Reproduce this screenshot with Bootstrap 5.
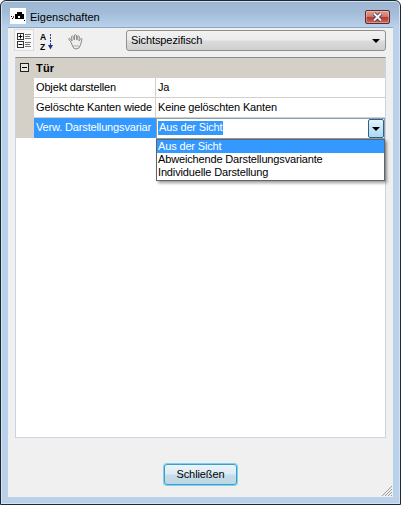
<!DOCTYPE html>
<html lang="de">
<head>
<meta charset="utf-8">
<title>Eigenschaften</title>
<link href="https://cdn.jsdelivr.net/npm/bootstrap@5.3.0/dist/css/bootstrap.min.css" rel="stylesheet">
<style>
html,body{margin:0;height:505px;overflow:hidden;background:#fff}
body{font-family:"Liberation Sans",Arial,sans-serif;font-size:11px;line-height:13px;color:#000;letter-spacing:-.15px}
.win-frame{width:401px;height:505px;border:1px solid #1c2a36;border-radius:6px 6px 0 0;background:linear-gradient(#9db7d3 0,#a3bdd8 12px,#b9d1ea 26px);box-shadow:inset 0 0 0 1px #d5e3f1;padding:0 7px 7px 7px}
.win-title{height:26px;padding-left:2px;padding-top:7px}
.win-title .ttl{font-size:11px;line-height:16px;margin-left:4px;padding-top:1px;letter-spacing:0}
.ttl-icon{width:16px;height:16px;display:block;background:#fff}
.win-close{width:25px;height:14px;margin-top:2px;margin-right:3px;border:1px solid #5c2a2a;border-radius:2px;background:linear-gradient(#dd9d90 0,#cf7a6c 45%,#b8392c 55%,#c9695c 100%);box-shadow:inset 0 0 0 1px rgba(255,255,255,.3)}
.win-close svg{display:block;margin:0 auto}
.win-body{height:470px;background:#f0f0f0;border:1px solid #8ea7c0;border-width:1px 0 0 0;position:relative;padding:0 7px}
.tool-row{height:29px}
.tool-ic{width:18px;height:20px;display:block;margin-top:2px;overflow:visible}
.tool-on{background:#f8f8f8;outline:1px solid #dcdcdc}
.view-combo{width:260px;height:21px;margin-left:auto;margin-top:2px;border:1px solid #8e8f8f;border-radius:3px;background:linear-gradient(#f2f2f2 0,#ebebeb 48%,#dcdcdc 52%,#cfcfcf 100%);padding:3px 0 0 4px;position:relative;letter-spacing:-.1px}
.arrow-dn{width:0;height:0;border-left:4px solid transparent;border-right:4px solid transparent;border-top:4px solid #000}
.view-combo .arrow-dn{position:absolute;right:5px;top:8px}
.prop-grid{height:381px;background:#fff;border:1px solid #c9d5e0;border-top:1px solid #8a8a8a;position:relative}
.cat-row{height:20px;background:#d4d0c8;font-weight:700;font-size:11px;padding-top:4px;padding-left:20px;position:relative;letter-spacing:.2px}
.cat-box{position:absolute;left:4px;top:5px;width:9px;height:9px;border:1px solid #222;background:#e8e6e1}
.cat-box::after{content:"";position:absolute;left:1px;top:3px;width:5px;height:1px;background:#000}
.prop-row{height:20px;background:#d4d0c8;padding-left:18px}
.pname{width:122px;height:20px;background:#fff;border-right:1px solid #d4d0c8;border-bottom:1px solid #d4d0c8;padding:3px 0 0 2px;white-space:nowrap;overflow:hidden}
.pval{flex:1;height:20px;background:#fff;border-bottom:1px solid #d4d0c8;padding:3px 0 0 2px;white-space:nowrap}
.pname-sel{background:#3399ff;color:#fff;border-color:#3399ff}
.edit-combo{position:absolute;left:140px;top:60px;width:229px;height:21px;background:#fff;border:1px solid #8a9fb5;padding:2px 0 0 1px}
.edit-sel{background:#3399ff;color:#fff;padding:0 1px;display:inline-block;height:14px}
.edit-btn{position:absolute;right:0;top:0;width:16px;height:19px;border:1px solid #2c628b;border-radius:2px;background:linear-gradient(#e3f4fc,#a9d9f0)}
.edit-btn .arrow-dn{margin:7px auto 0}
.drop-list{position:absolute;left:140px;top:81px;width:229px;height:42px;background:#fff;border:1px solid #646464;box-shadow:2px 2px 3px rgba(0,0,0,.4);z-index:5}
.drop-item{height:13px;padding-left:1px;white-space:nowrap;line-height:13px}
.drop-on{background:#3399ff;color:#fff}
.foot-row{height:59px;padding-top:26px}
.close-btn{width:73px;height:21px;border:1px solid #3c9fc9;border-radius:3px;background:linear-gradient(#ecf5fa 0,#dcebf3 48%,#c8dde8 52%,#bcd6e4 100%);box-shadow:0 0 0 1px #7fd0ee;padding:0;font-size:11px;line-height:17px;letter-spacing:-.1px;color:#000;display:block}
.grip{position:absolute;right:0;bottom:0;width:13px;height:13px}
</style>
</head>
<body>
<div class="win-frame">
  <div class="win-title d-flex align-items-start">
    <svg class="ttl-icon" viewBox="0 0 16 16"><path d="M5 6h2V4h5v2h2v5H5z" fill="#000"/><rect x="8" y="8" width="2" height="2" fill="#fff"/><rect x="1" y="8" width="1" height="1" fill="#000"/><rect x="2" y="10" width="1" height="1" fill="#000"/><rect x="3" y="8" width="1" height="2" fill="#d22"/><rect x="14" y="12" width="1" height="1" fill="#000"/></svg>
    <span class="ttl">Eigenschaften</span>
    <div class="win-close ms-auto"><svg width="23" height="12" viewBox="0 0 23 12"><path d="M8 2.5 L15 9.5 M15 2.5 L8 9.5" stroke="#3a3a50" stroke-width="3.6"/><path d="M8 2.5 L15 9.5 M15 2.5 L8 9.5" stroke="#f4f4f8" stroke-width="2"/></svg></div>
  </div>
  <div class="win-body">
    <div class="tool-row d-flex">
      <svg class="tool-ic tool-on" viewBox="0 0 18 20">
        <rect x="2.500" y="3.500" width="6" height="6" fill="#fff" stroke="#333"/><path d="M3.500 6.500h4M5.500 4.500v4" stroke="#000"/>
        <rect x="2.500" y="11.500" width="6" height="6" fill="#fff" stroke="#333"/><path d="M3.500 14.500h4" stroke="#000"/>
        <path d="M10 4.500h6M10 6.500h5M10 8.500h6M10 12.500h6M10 14.500h5M10 16.500h6" stroke="#777"/>
      </svg>
      <svg class="tool-ic ms-1 me-1" viewBox="0 0 18 20">
        <text x="3" y="10" font-family="Liberation Sans" font-size="8.500" font-weight="700" letter-spacing="0">A</text>
        <text x="3" y="19.500" font-family="Liberation Sans" font-size="8.500" font-weight="700" letter-spacing="0">Z</text>
        <path d="M13.500 4v11" stroke="#2a3f9a" stroke-dasharray="2 1"/><path d="M11 15h5l-2.500 4.500z" fill="#1c2f8c"/>
      </svg>
      <svg class="tool-ic ms-2" viewBox="0 0 18 20">
        <path d="M4 12 L1.500 9 Q2 8 3 8.500 L5 11 L4.500 6.500 Q5.500 5.500 6.300 6.500 L7.300 10 L7.500 5 Q8.500 4.300 9.300 5 L9.800 10 L10.800 6 Q11.800 5.500 12.400 6.500 L12 11 L13.800 8.500 Q14.800 8.300 15 9.300 L13.500 15 Q12.500 19 9 19 Q6.500 19 5.500 16 Z" fill="#f0eeea" stroke="#8b8b8b"/>
        <path d="M7 15v2M9 15v2M11 15v2" stroke="#aaa"/>
      </svg>
      <div class="view-combo">Sichtspezifisch<div class="arrow-dn"></div></div>
    </div>
    <div class="prop-grid">
      <div class="cat-row"><span class="cat-box"></span>Tür</div>
      <div class="prop-row d-flex"><div class="pname">Objekt darstellen</div><div class="pval">Ja</div></div>
      <div class="prop-row d-flex"><div class="pname">Gelöschte Kanten wiede</div><div class="pval">Keine gelöschten Kanten</div></div>
      <div class="prop-row d-flex"><div class="pname pname-sel">Verw. Darstellungsvariar</div><div class="pval"></div></div>
      <div class="edit-combo"><span class="edit-sel">Aus der Sicht</span><div class="edit-btn"><div class="arrow-dn"></div></div></div>
      <div class="drop-list">
        <div class="drop-item drop-on">Aus der Sicht</div>
        <div class="drop-item">Abweichende Darstellungsvariante</div>
        <div class="drop-item">Individuelle Darstellung</div>
      </div>
    </div>
    <div class="foot-row d-flex justify-content-center"><button type="button" class="close-btn">Schließen</button></div>
    <svg class="grip" viewBox="0 0 13 13"><path d="M12 2L2 12M12 5L5 12M12 8L8 12M12 11L11 12" stroke="#9a9a9a"/></svg>
  </div>
</div>
</body>
</html>
